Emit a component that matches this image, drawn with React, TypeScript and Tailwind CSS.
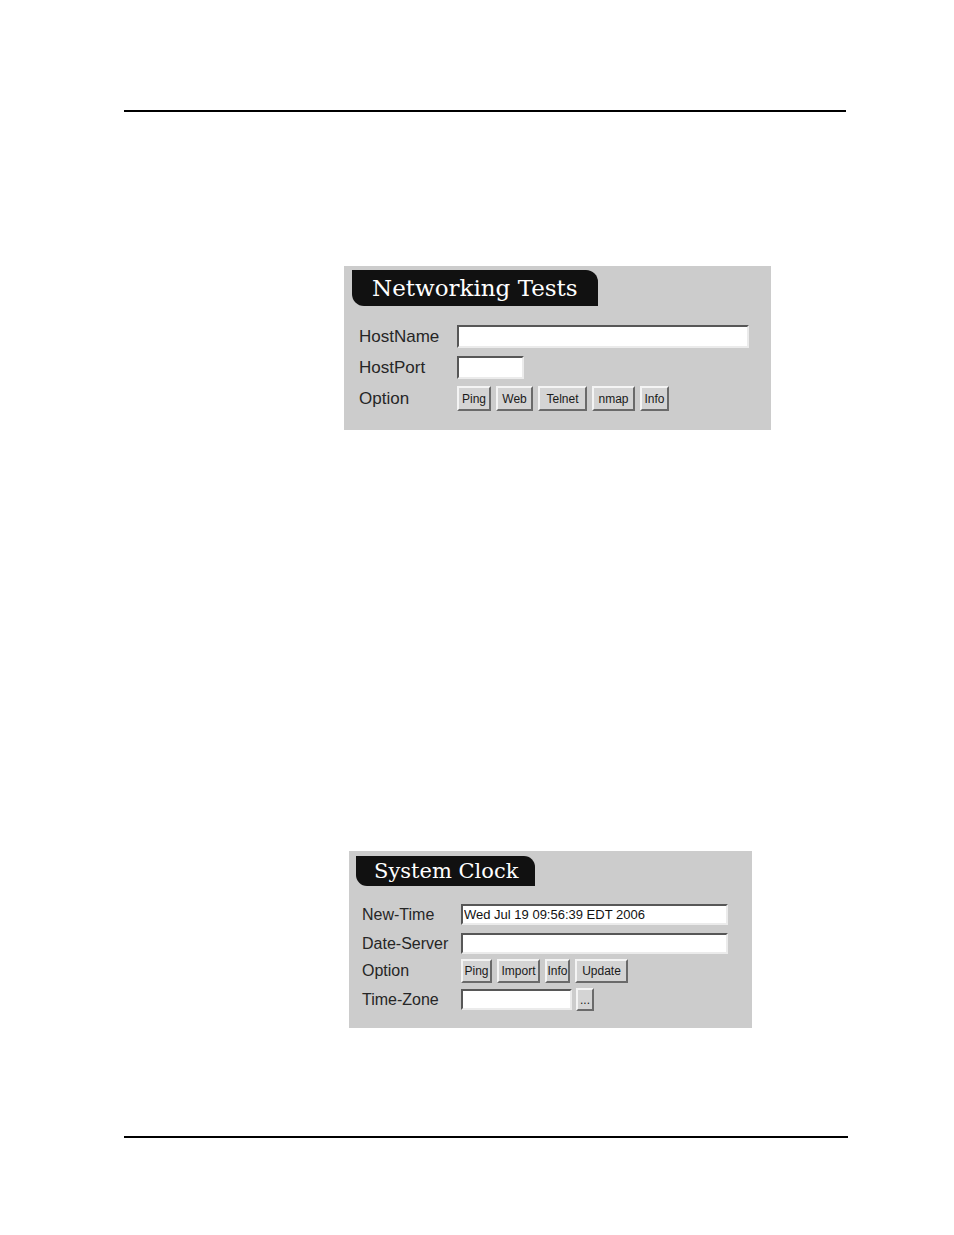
import React from "react";

const sans = { fontFamily: '"Liberation Sans", Arial, sans-serif' } as const;

function Btn({ w, h, children }: { w: string; h: string; children: React.ReactNode }) {
  return (
    <button
      type="button"
      className={`${w} ${h} shrink-0 flex items-center justify-center bg-[#d4d4d4] border-2 border-t-[#f4f4f4] border-l-[#f4f4f4] border-r-[#6a6a6a] border-b-[#6a6a6a] text-[12px] leading-none text-[#1a1a1a] font-['Liberation_Sans',Arial,sans-serif] p-0`}
    >
      {children}
    </button>
  );
}

function Field({ w, h, value }: { w: string; h: string; value?: string }) {
  return (
    <input
      readOnly
      value={value ?? ""}
      className={`${w} ${h} shrink-0 bg-white border-2 border-t-[#575757] border-l-[#575757] border-r-[#ebebeb] border-b-[#ebebeb] px-[1px] text-[13px] leading-none text-[#111] font-['Liberation_Sans',Arial,sans-serif] outline-none`}
    />
  );
}

export default function App() {
  return (
    <div className="w-[954px] h-[1235px] bg-white flex flex-col" style={sans}>
      <div className="mt-[110px] ml-[124px] w-[722px] h-[2px] bg-black" />

      {/* Networking Tests */}
      <div className="mt-[154px] ml-[344px] w-[427px] h-[164px] bg-[#cccccc] flex flex-col">
        <div className="mt-[4px] ml-[8px] w-[246px] h-[36px] bg-[#111111] rounded-tr-[12px] rounded-bl-[12px] flex items-center pl-[20px]">
          <span className="text-white text-[23px] leading-none font-['DejaVu_Serif',serif] tracking-[0px]">
            Networking Tests
          </span>
        </div>
        <div className="mt-[19px] ml-[15px] flex flex-col text-[17px] leading-none text-[#262626]">
          <div className="flex items-center h-[23px]">
            <span className="w-[98px]">HostName</span>
            <Field w="w-[292px]" h="h-[23px]" />
          </div>
          <div className="flex items-center h-[23px] mt-[8px]">
            <span className="w-[98px]">HostPort</span>
            <Field w="w-[67px]" h="h-[23px]" />
          </div>
          <div className="flex items-center h-[25px] mt-[7px]">
            <span className="w-[98px]">Option</span>
            <div className="flex gap-[5px]">
              <Btn w="w-[34px]" h="h-[25px]">Ping</Btn>
              <Btn w="w-[37px]" h="h-[25px]">Web</Btn>
              <Btn w="w-[49px]" h="h-[25px]">Telnet</Btn>
              <Btn w="w-[43px]" h="h-[25px]">nmap</Btn>
              <Btn w="w-[29px]" h="h-[25px]">Info</Btn>
            </div>
          </div>
        </div>
      </div>

      {/* System Clock */}
      <div className="mt-[421px] ml-[349px] w-[403px] h-[177px] bg-[#cccccc] flex flex-col">
        <div className="mt-[5px] ml-[7px] w-[179px] h-[30px] bg-[#111111] rounded-tr-[11px] rounded-bl-[11px] flex items-center pl-[18px]">
          <span className="text-white text-[21px] leading-none font-['DejaVu_Serif',serif]">
            System Clock
          </span>
        </div>
        <div className="mt-[18px] ml-[13px] flex flex-col text-[16px] leading-none text-[#262626]">
          <div className="flex items-center h-[21px]">
            <span className="w-[99px]">New-Time</span>
            <Field w="w-[267px]" h="h-[21px]" value="Wed Jul 19 09:56:39 EDT 2006" />
          </div>
          <div className="flex items-center h-[21px] mt-[8px]">
            <span className="w-[99px]">Date-Server</span>
            <Field w="w-[267px]" h="h-[21px]" />
          </div>
          <div className="flex items-center h-[24px] mt-[5px]">
            <span className="w-[99px]">Option</span>
            <div className="flex gap-[5px]">
              <Btn w="w-[31px]" h="h-[24px]">Ping</Btn>
              <Btn w="w-[43px]" h="h-[24px]">Import</Btn>
              <Btn w="w-[25px]" h="h-[24px]">Info</Btn>
              <Btn w="w-[53px]" h="h-[24px]">Update</Btn>
            </div>
          </div>
          <div className="flex items-center h-[23px] mt-[5px]">
            <span className="w-[99px]">Time-Zone</span>
            <Field w="w-[111px]" h="h-[21px]" />
            <div className="ml-[4px]">
              <Btn w="w-[18px]" h="h-[23px]">...</Btn>
            </div>
          </div>
        </div>
      </div>

      <div className="mt-[108px] ml-[124px] w-[724px] h-[2px] bg-black" />
    </div>
  );
}
